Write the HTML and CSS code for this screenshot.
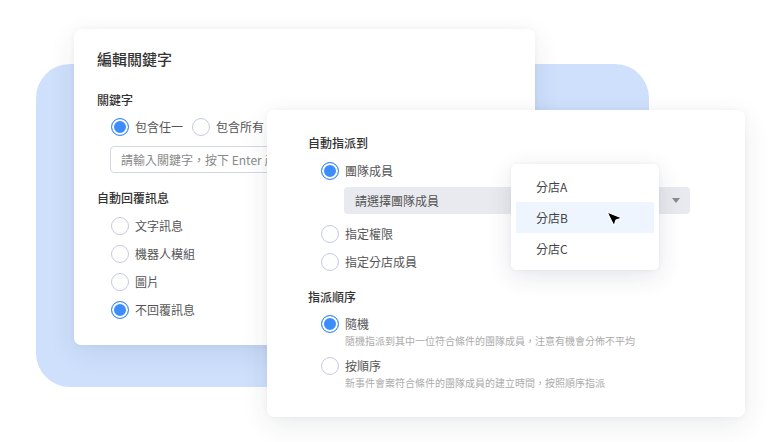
FILE: index.html
```html
<!DOCTYPE html>
<html lang="zh-Hant">
<head>
<meta charset="utf-8">
<link rel="stylesheet" href="styles.css">
</head>
<body>
<div class="stage">
  <div class="backdrop"></div>

  <div class="card card-keyword">
    <h1 class="title">編輯關鍵字</h1>
    <div class="label">關鍵字</div>
    <div class="radio-inline">
      <span class="radio checked"></span><span class="opt">包含任一</span>
      <span class="radio"></span><span class="opt">包含所有</span>
    </div>
    <div class="input">請輸入關鍵字，按下 Enter 產生標籤</div>
    <div class="label label-gap">自動回覆訊息</div>
    <div class="radio-list">
      <div class="row"><span class="radio"></span><span class="opt">文字訊息</span></div>
      <div class="row"><span class="radio"></span><span class="opt">機器人模組</span></div>
      <div class="row"><span class="radio"></span><span class="opt">圖片</span></div>
      <div class="row"><span class="radio checked"></span><span class="opt">不回覆訊息</span></div>
    </div>
  </div>

  <div class="card card-assign">
    <div class="label">自動指派到</div>
    <div class="radio-list list-assign">
      <div class="row"><span class="radio checked"></span><span class="opt">團隊成員</span></div>
      <div class="select"><span>請選擇團隊成員</span><span class="caret"></span></div>
      <div class="row row-after-select"><span class="radio"></span><span class="opt">指定權限</span></div>
      <div class="row"><span class="radio"></span><span class="opt">指定分店成員</span></div>
    </div>
    <div class="label label-gap2">指派順序</div>
    <div class="order-list">
      <div class="order">
        <span class="radio checked"></span>
        <div class="order-text">
          <div class="opt">隨機</div>
          <div class="desc">隨機指派到其中一位符合條件的團隊成員，注意有機會分佈不平均</div>
        </div>
      </div>
      <div class="order">
        <span class="radio"></span>
        <div class="order-text">
          <div class="opt">按順序</div>
          <div class="desc">新事件會案符合條件的團隊成員的建立時間，按照順序指派</div>
        </div>
      </div>
    </div>
  </div>

  <div class="menu">
    <div class="item">分店A</div>
    <div class="item active">分店B</div>
    <div class="item">分店C</div>
  </div>

  <svg class="cursor" width="20" height="20" viewBox="0 0 20 20">
    <path d="M2 3 L17 9 L11 11 L9 17 Z" fill="#000" stroke="#fff" stroke-width="1.2" stroke-linejoin="round"/>
  </svg>
</div>
</body>
</html>
```

FILE: styles.css
```css
* { box-sizing: border-box; margin: 0; padding: 0; }
html, body { width: 768px; height: 442px; overflow: hidden; background: #fff; }
body {
  font-family: "Noto Sans CJK TC", "Noto Sans", sans-serif;
  color: #333;
}
.stage { position: relative; width: 768px; height: 442px; }

.backdrop {
  position: absolute;
  left: 36px; top: 64px;
  width: 613px; height: 323px;
  border-radius: 34px;
  background: #cee0fc;
}

.card {
  position: absolute;
  background: #fff;
  border-radius: 7px;
  box-shadow: 0 8px 28px rgba(30, 40, 70, 0.09), 0 0 6px rgba(30, 40, 70, 0.04);
}

.card-keyword {
  left: 74px; top: 29px;
  width: 461px; height: 316px;
  padding: 18px 0 0 23px;
  overflow: hidden;
}
.title { font-size: 15px; font-weight: 500; line-height: 24px; color: #333; }
.label { font-size: 12px; line-height: 20px; font-weight: 500; color: #333; }
.card-keyword .title + .label { margin-top: 19px; }

.radio-inline {
  display: flex; align-items: center;
  margin-top: 7px; padding-left: 14px; height: 20px;
}
.radio-inline .opt { margin-right: 9px; }

.radio {
  flex: none;
  width: 18px; height: 18px;
  border-radius: 50%;
  border: 1.5px solid #c6cadf;
  background: #fff;
  margin-right: 6px;
}
.radio.checked {
  border: 1.5px solid #3d8cfb;
  background: #3d8cfb;
  box-shadow: inset 0 0 0 2px #fff;
}
.opt { font-size: 12px; line-height: 20px; color: #555; }

.input {
  margin-top: 9px; margin-left: 13px;
  width: 300px; height: 27px;
  border: 1px solid #d4d7e0;
  border-radius: 4px;
  padding-left: 10px;
  font-size: 12px; line-height: 25px;
  color: #8a8a8a;
  white-space: nowrap; overflow: hidden;
}
.label-gap { margin-top: 15px; }

.radio-list { margin-top: 8px; padding-left: 14px; display: flex; flex-direction: column; gap: 8px; }
.row { display: flex; align-items: center; height: 20px; }

.card-assign {
  left: 267px; top: 110px;
  width: 478px; height: 307px;
  padding: 23px 0 0 41px;
}
.list-assign { gap: 0; padding-left: 13px; }
.list-assign .row + .row { margin-top: 8px; }
.select {
  margin: 6px 0 0 23px;
  width: 346px; height: 27px;
  background: #e9eaef;
  border-radius: 4px;
  display: flex; align-items: center; justify-content: space-between;
  padding: 0 10px 0 11px;
  font-size: 12px; color: #555;
}
.caret {
  width: 0; height: 0;
  border-left: 4px solid transparent;
  border-right: 4px solid transparent;
  border-top: 5px solid #8a8a8f;
}
.row-after-select { margin-top: 10px; }
.label-gap2 { margin-top: 15px; }

.order-list { margin-top: 8px; padding-left: 13px; display: flex; flex-direction: column; gap: 8px; }
.order { display: flex; align-items: flex-start; }
.order .radio { margin-top: 0; }
.order-text .opt { line-height: 18px; }
.desc { font-size: 10px; line-height: 16px; color: #ababab; white-space: nowrap; }

.menu {
  position: absolute;
  left: 511px; top: 164px;
  width: 148px; height: 106px;
  background: #fff;
  border-radius: 5px;
  padding: 7px 5px 6px;
  box-shadow: 0 6px 24px rgba(30, 40, 70, 0.12), 0 0 4px rgba(30, 40, 70, 0.05);
}
.item {
  height: 31px;
  padding-left: 20px;
  font-size: 12px; line-height: 31px;
  color: #444;
}
.item.active { background: #eef5ff; }

.cursor { position: absolute; left: 605px; top: 209px; }
```
